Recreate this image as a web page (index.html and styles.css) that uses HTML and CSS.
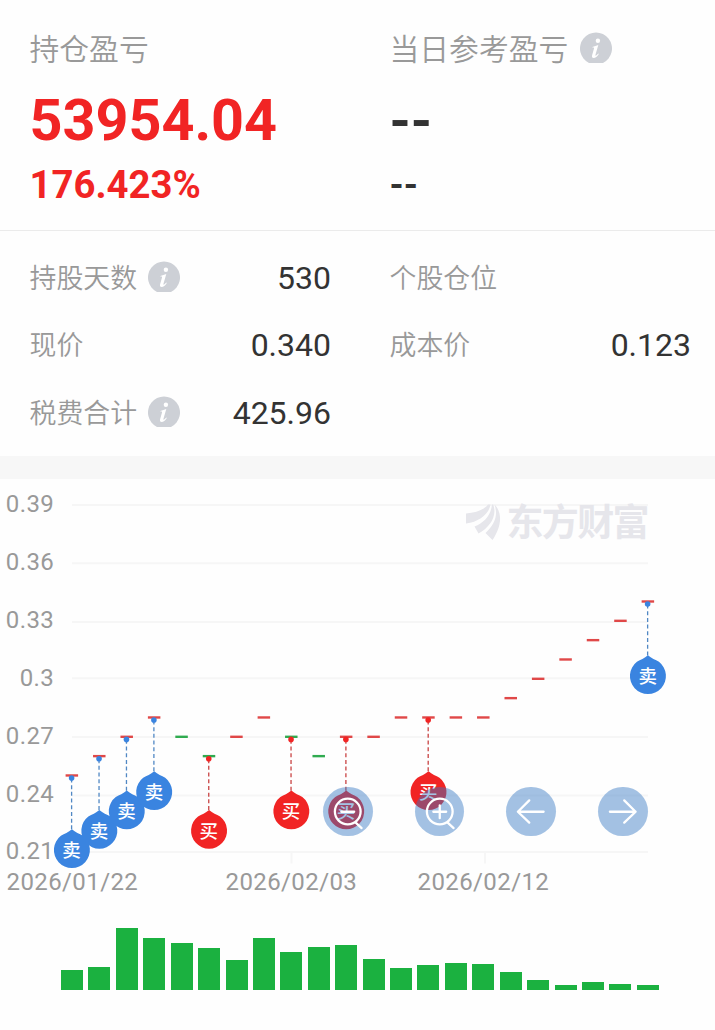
FILE: index.html
```html
<!DOCTYPE html>
<html lang="zh-CN">
<head>
  <meta charset="UTF-8"/>
  <meta name="viewport" content="width=device-width, initial-scale=1.0"/>
  <title>持仓盈亏</title>
  <link rel="stylesheet" href="styles.css">
</head>
<body>
  <section class="summary">
    <div class="profit">
      <h2 class="label">持仓盈亏</h2>
      <p class="amount up">53954.04</p>
      <p class="percent up">176.423%</p>
    </div>
    <div class="profit">
      <h2 class="label">当日参考盈亏 <svg class="info" viewBox="0 0 32 32"><use href="#info"/></svg></h2>
      <p class="amount empty">--</p>
      <p class="percent empty">--</p>
    </div>
  </section>

  <section class="details">
    <div class="row"><span class="name">持股天数</span><svg class="info" viewBox="0 0 32 32"><use href="#info"/></svg><span class="value">530</span></div>
    <div class="row"><span class="name">个股仓位</span></div>
    <div class="row"><span class="name">现价</span><span class="value">0.340</span></div>
    <div class="row"><span class="name">成本价</span><span class="value">0.123</span></div>
    <div class="row"><span class="name">税费合计</span><svg class="info" viewBox="0 0 32 32"><use href="#info"/></svg><span class="value">425.96</span></div>
  </section>

  <section class="chart">
    <svg class="price" id="price" viewBox="0 0 715 421">
      <defs>
        <symbol id="info" viewBox="0 0 32 32">
          <path d="M9 30.9A16 16 0 1 1 23 30.9Z" fill="#cdd0d6"/>
          <circle cx="17.9" cy="8.7" r="2.2" fill="#fff"/>
          <path d="M12.4 14.9L18.3 12.9L15.4 23C15.2 24 15.8 24 16.5 23.3L18.3 21.5L18.8 22C17.2 24.6 15.4 26 13.7 26C12.1 26 11.7 24.9 12.1 23.3L14 16.4C14.3 15.4 13.6 15.5 12.4 15.6Z" fill="#fff"/>
        </symbol>
        <path id="pin" d="M0 -20.7C3.5 -17.6 7.5 -16.2 11 -14.2A18 18 0 1 1 -11 -14.2C-7.5 -16.2 -3.5 -17.6 0 -20.7Z"/>
      </defs>
      <g id="grid"></g>
      <g class="watermark">
        <path d="M466 34.5C476 33.5 484 31 488 25.5H490.5C489 35 479 43 466 44.5Z"/>
        <path d="M474.5 47.5C484 44 491 36 492 25.5H493.2C497.5 37 490 48 478.5 54.5Z"/>
        <path d="M494.5 25.5C502 33 502.5 46 492.5 61L485.5 54C495.5 44 498 36 494.5 25.5Z"/>
        <text x="506.5" y="56.5" textLength="143">东方财富</text>
      </g>
      <g id="quotes"></g>
      <g id="trades"></g>
    </svg>
    <div class="tools">
      <button class="tool"><svg viewBox="0 0 50 50"><circle cx="25" cy="24.8" r="13"/><path d="M18.5 25H31.5M33 36L39 41.5"/></svg></button>
      <button class="tool"><svg viewBox="0 0 50 50"><circle cx="25" cy="24.8" r="13"/><path d="M18.5 25H31.5M25 18.5V31.5M33 36L39 41.5"/></svg></button>
      <button class="tool"><svg viewBox="0 0 50 50"><path d="M38 25H12M23.5 13.5L12 25L23.5 36"/></svg></button>
      <button class="tool"><svg viewBox="0 0 50 50"><path d="M12 25H38M26.5 13.5L38 25L26.5 36"/></svg></button>
    </div>
    <div class="volume" id="volume"></div>
  </section>

  <script src="chart.js"></script>
</body>
</html>
```
FILE: styles.css
```css
* {
  margin: 0;
  padding: 0;
  box-sizing: border-box;
}

body {
  width: 715px;
  background: #fefefe;
  color: #333;
  font-family: Roboto, 'Noto Sans CJK SC', sans-serif;
}

.summary {
  display: grid;
  grid-template-columns: 360px 1fr;
  height: 231px;
  padding: 27px 0 0 29.5px;
  border-bottom: 1px solid #ebebeb;
}

.label {
  display: flex;
  align-items: center;
  gap: 12px;
  height: 40px;
  font-size: 29.8px;
  font-weight: 350;
  color: #999;
}

.info {
  flex: none;
  width: 32px;
  height: 32px;
}

.label .info {
  margin-top: 1px;
}

.amount {
  margin-top: 19px;
  height: 70px;
  font-size: 57.5px;
  line-height: 70px;
  font-weight: 700;
}

.percent {
  margin-top: 5px;
  font-size: 38.3px;
  line-height: 48px;
  font-weight: 700;
}

.up {
  color: #f12424;
}

.amount.empty {
  font-size: 54px;
}

.percent.empty {
  font-size: 36px;
}

.details {
  display: grid;
  grid-template-columns: 301.5px 301.5px;
  grid-auto-rows: 67.5px;
  column-gap: 58.5px;
  height: 225px;
  padding: 12px 0 0 29.5px;
}

.row {
  display: flex;
  align-items: center;
}

.name {
  margin-top: -1px;
  font-size: 26.9px;
  font-weight: 350;
  color: #999;
}

.row .info {
  margin-left: 11px;
}

.value {
  margin: 2px 0 0 auto;
  font-size: 32px;
}

.chart {
  position: relative;
  border-top: 23px solid #f7f7f7;
}

.price {
  display: block;
  width: 715px;
  height: 421px;
}

.price text {
  font-size: 24px;
  letter-spacing: 0.4px;
  fill: #999;
}

.gridline {
  stroke: #f6f6f6;
  stroke-width: 2;
}

.watermark {
  fill: #e6e6eb;
}

.price .watermark text {
  font-family: 'Noto Sans CJK SC', sans-serif;
  font-size: 37px;
  font-weight: 700;
  letter-spacing: 0;
  fill: #e6e6eb;
}

.quote {
  stroke-width: 2.4;
}

.quote.rise {
  stroke: #e04848;
}

.quote.fall {
  stroke: #30ab50;
}

.stem {
  stroke-width: 1.3;
  stroke-dasharray: 4 2.7;
}

.buy {
  fill: #f12424;
  stroke: #c94444;
}

.sell {
  fill: #3a84e0;
  stroke: #5188c4;
}

.buy use, .sell use, .buy circle, .sell circle {
  stroke: none;
}

.price .mark {
  font-size: 18.5px;
  font-weight: 500;
  letter-spacing: 0;
  text-anchor: middle;
  fill: #fff;
  stroke: none;
}

/* zoom and pan buttons float over the chart */
.tools {
  position: absolute;
  top: 307.5px;
  left: 323px;
  display: flex;
  gap: 42.2px;
}

.tool {
  width: 49.5px;
  height: 49.5px;
  border: none;
  border-radius: 50%;
  background: rgba(53, 120, 195, 0.45);
  cursor: pointer;
}

.tool svg {
  display: block;
  width: 100%;
  height: 100%;
  fill: none;
  stroke: #fff;
  stroke-width: 2.3;
  stroke-linecap: round;
  stroke-linejoin: round;
}

.volume {
  display: flex;
  align-items: flex-end;
  justify-content: space-between;
  width: 598px;
  height: 90px;
  margin-left: 61px;
}

.bar {
  width: 22px;
  background: #1bb140;
}
```
FILE: chart.js
```js
const price = [0.25, 0.26, 0.27, 0.28, 0.27, 0.26, 0.27, 0.28, 0.27, 0.26, 0.27, 0.27, 0.28, 0.28, 0.28, 0.28, 0.29, 0.30, 0.31, 0.32, 0.33, 0.34];
const fallDays = [4, 5, 8, 9];
const trades = { 0: 'sell', 1: 'sell', 2: 'sell', 3: 'sell', 5: 'buy', 8: 'buy', 10: 'buy', 13: 'buy', 21: 'sell' };
const volume = [20, 23, 62, 52.5, 47, 42, 30, 52.5, 38.5, 42.7, 45, 31, 21.7, 25, 27, 26.3, 18.2, 10.2, 5, 8, 6.5, 5.5];
const ticks = [['0.39', 26], ['0.36', 84.3], ['0.33', 143], ['0.3', 199.3], ['0.27', 258], ['0.24', 316.5], ['0.21', 373]];
const dates = [['2026/01/22', 6.5], ['2026/02/03', 225.5, 291.5], ['2026/02/12', 417.5, 485]];

const x = i => 71.6 + i * 27.43;
const y = p => 257.8 - (p - 0.27) * 1933;

let grid = '';
ticks.forEach(([label, pos], i) => {
  grid += `<path class="gridline" d="M72 ${pos}H648"/>`;
  grid += `<text x="54.2" y="${33 + i * 57.9}" text-anchor="end">${label}</text>`;
});
dates.forEach(([label, left, tick]) => {
  if (tick) grid += `<path class="gridline" d="M${tick} 374V384.5"/>`;
  grid += `<text x="${left}" y="411">${label}</text>`;
});
document.getElementById('grid').innerHTML = grid;

document.getElementById('quotes').innerHTML = price.map((p, i) =>
  `<path class="quote ${fallDays.includes(i) ? 'fall' : 'rise'}" d="M${x(i) - 6} ${y(p)}h12.5"/>`
).join('');

document.getElementById('trades').innerHTML = Object.keys(trades).map(i => `
  <g class="${trades[i]}" transform="translate(${x(i)} ${y(price[i])})">
    <path class="stem" d="M0 3V55"/>
    <circle cy="2.6" r="2.8"/>
    <use href="#pin" x="0.3" y="74.5"/>
    <text class="mark" y="81.5">${trades[i] === 'buy' ? '买' : '卖'}</text>
  </g>`).join('');

document.getElementById('volume').innerHTML = volume.map(v =>
  `<div class="bar" style="height: ${v}px"></div>`
).join('');
```
